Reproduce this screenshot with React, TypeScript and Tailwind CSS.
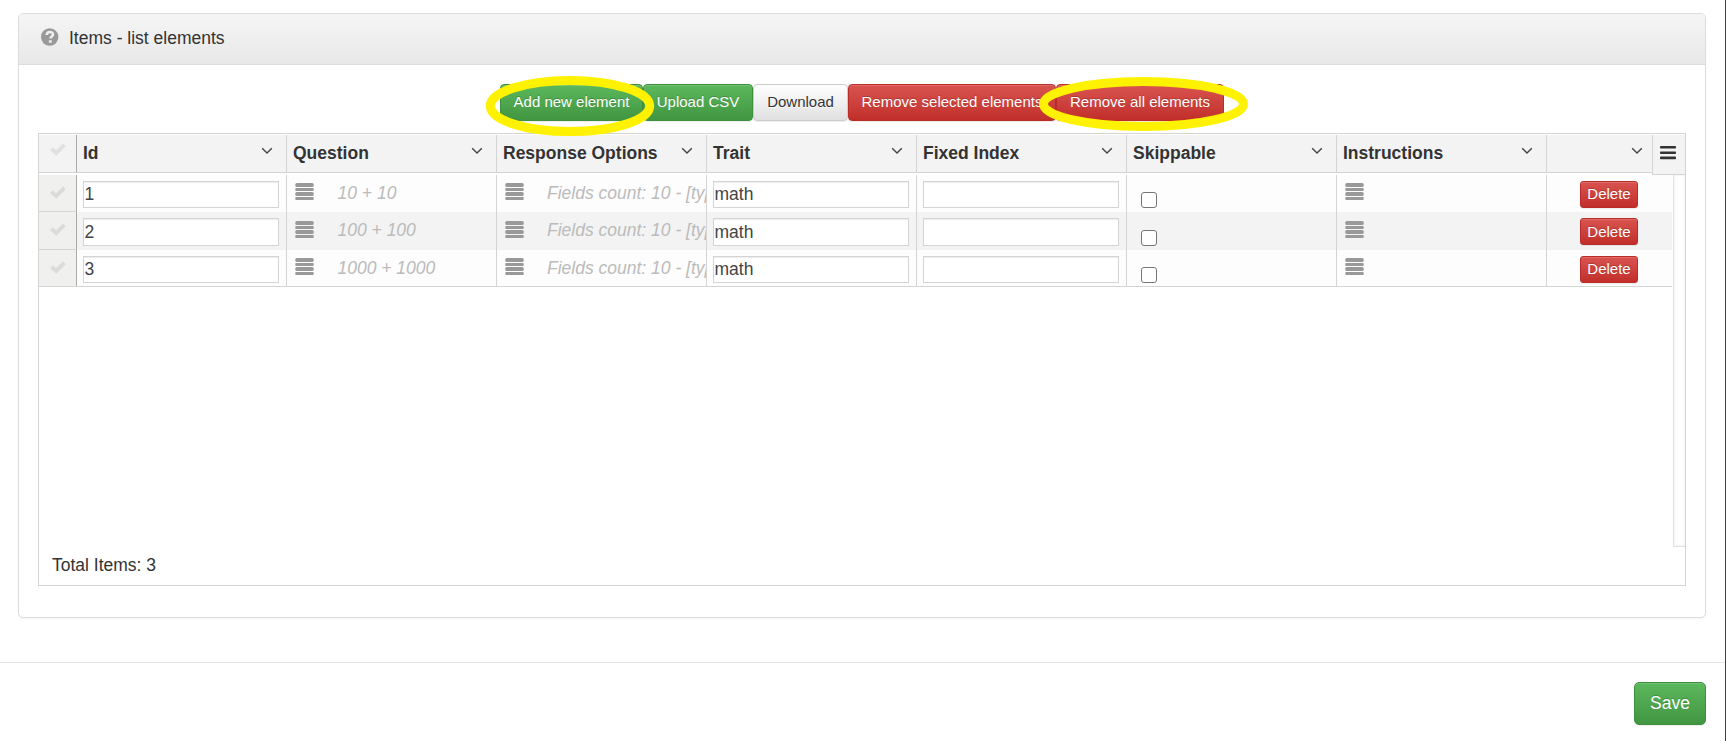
import React from "react";

const rows = [
  { id: "1", question: "10 + 10", trait: "math", shade: "bg-[#fdfdfd]" },
  { id: "2", question: "100 + 100", trait: "math", shade: "bg-[#f3f3f3]" },
  { id: "3", question: "1000 + 1000", trait: "math", shade: "bg-[#fdfdfd]" },
];

const columns = [
  "Id",
  "Question",
  "Response Options",
  "Trait",
  "Fixed Index",
  "Skippable",
  "Instructions",
];

const tones = {
  green:
    "border-[#3e8f3e] bg-linear-to-b from-[#5cb85c] to-[#419641] text-white [text-shadow:0_-1px_0_rgba(0,0,0,0.2)]",
  red: "border-[#b92c28] bg-linear-to-b from-[#d9534f] to-[#c12e2a] text-white [text-shadow:0_-1px_0_rgba(0,0,0,0.2)]",
  plain:
    "border-[#ccc] bg-linear-to-b from-white to-[#e0e0e0] text-[#333] [text-shadow:0_1px_0_#fff]",
};

function Button({
  tone,
  className,
  children,
}: {
  tone: keyof typeof tones;
  className: string;
  children: React.ReactNode;
}) {
  return (
    <button
      className={`flex shrink-0 items-center justify-center border whitespace-nowrap shadow-[inset_0_1px_0_rgba(255,255,255,0.15),0_1px_1px_rgba(0,0,0,0.075)] ${tones[tone]} ${className}`}
    >
      {children}
    </button>
  );
}

function HelpIcon() {
  return (
    <svg width="18" height="18" viewBox="0 0 18 18" className="-mt-[1px] shrink-0">
      <circle cx="8.7" cy="9" r="8.7" fill="#999" />
      <path
        d="M5.7 7C5.7 4.9 7 4 8.9 4c1.9 0 3.1 1 3.1 2.5 0 2-2.5 2.1-2.5 4"
        fill="none"
        stroke="#eee"
        strokeWidth="2.6"
      />
      <path d="M7.9 12.2h2.8v2.6H7.9z" fill="#eee" />
    </svg>
  );
}

function Check({ className }: { className: string }) {
  return (
    <svg width="16" height="13" viewBox="0 0 16 13" className={className}>
      <path d="M1.4 5.8 6.2 10 14.4 1.8" fill="none" stroke="currentColor" strokeWidth="3.9" />
    </svg>
  );
}

function Chevron() {
  return (
    <svg width="12" height="8" viewBox="0 0 12 8" className="mt-[12px] shrink-0">
      <path d="M1.2 1.2 6 6 10.8 1.2" fill="none" stroke="#444" strokeWidth="1.4" />
    </svg>
  );
}

function ListIcon() {
  return (
    <svg width="19" height="18" viewBox="0 0 19 18" className="mt-[8.75px] shrink-0" fill="#999">
      <rect x="0.3" y="0" width="18.4" height="4" rx="1.6" />
      <rect x="0.3" y="5" width="18.4" height="3" rx="0.8" />
      <rect x="0.3" y="9" width="18.4" height="4" rx="1.6" />
      <rect x="0.3" y="14" width="18.4" height="3" rx="0.8" />
    </svg>
  );
}

function Field({ value }: { value: string }) {
  return (
    <input
      readOnly
      value={value}
      className="mt-[6.25px] ml-[6px] h-[27.5px] w-[196px] border border-[#d4d4d4] bg-white pl-[0.5px] text-[17.5px] text-[#444] shadow-[inset_0_1px_1px_rgba(0,0,0,0.075)] outline-none"
    />
  );
}

const cell = "flex h-full w-[210px] shrink-0 items-start overflow-hidden border-r border-[#d4d4d4]";

export default function App() {
  return (
    <div className="relative flex h-[741px] w-[1726px] flex-col overflow-hidden bg-white pt-[13px] font-['Liberation_Sans',Arial,sans-serif] text-[17.5px] leading-[25px] text-[#333]">
      <section className="ml-[18px] flex h-[605px] w-[1688px] flex-col rounded-[5px] border border-[#ddd] bg-white shadow-[0_1px_2px_rgba(0,0,0,0.05)]">
        <header className="flex h-[51px] shrink-0 items-center rounded-t-[4px] border-b border-[#ddd] bg-linear-to-b from-[#f5f5f5] to-[#e8e8e8] pb-[3px] pl-[22px]">
          <HelpIcon />
          <h1 className="mt-[1px] ml-[10px]">Items - list elements</h1>
        </header>

        <div className="mt-[19px] ml-[481px] flex h-[37px] shrink-0 text-[15px]">
          <Button tone="green" className="w-[143px] rounded-[4px] pb-[3px]">Add new element</Button>
          <Button tone="green" className="w-[110px] rounded-[4px] pb-[3px]">Upload CSV</Button>
          <Button tone="plain" className="w-[95px] rounded-[4px] pb-[3px]">Download</Button>
          <Button tone="red" className="w-[208px] rounded-[4px] pb-[3px]">Remove selected elements</Button>
          <Button tone="red" className="w-[168px] rounded-[4px] pb-[3px]">Remove all elements</Button>
        </div>

        <div className="mt-[12px] ml-[19px] flex h-[453px] w-[1648px] shrink-0 flex-col border border-[#d4d4d4] pt-px">
          <div className="flex h-[39.5px] shrink-0 items-start">
            <div className="flex h-[38px] w-[38px] shrink-0 justify-center border-r border-b border-r-[#aaa] border-b-[#d4d4d4] bg-[#f3f3f3] pt-[8px]">
              <Check className="text-[#e0e0e0]" />
            </div>
            {columns.map((name) => (
              <div
                key={name}
                className="flex h-[38px] w-[210px] shrink-0 justify-between border-r border-b border-[#d4d4d4] bg-[#f3f3f3] pr-[13px] pl-[6px] font-bold"
              >
                <span className="mt-[6px]">{name}</span>
                <Chevron />
              </div>
            ))}
            <div className="flex h-[38px] w-[105px] shrink-0 justify-end border-b border-[#d4d4d4] bg-[#f3f3f3] pr-[9px]">
              <Chevron />
            </div>
            <div className="z-10 flex h-[40px] w-[33px] shrink-0 justify-start border-b border-l border-[#d4d4d4] bg-[#f3f3f3] pt-[11px] pl-[7px]">
              <svg width="16" height="14" viewBox="0 0 16 14" fill="#333">
                <rect y="0" width="16" height="2.6" rx="0.8" />
                <rect y="5.4" width="16" height="2.6" rx="0.8" />
                <rect y="10.6" width="16" height="2.6" rx="0.8" />
              </svg>
            </div>
          </div>

          <div className="flex h-[372.5px] shrink-0 justify-between">
            <div className="flex w-[1633px] flex-col">
              {rows.map((row, i) => (
                <div
                  key={row.id}
                  className={`flex h-[37.5px] shrink-0 ${row.shade} ${i === 2 ? "border-b border-[#d4d4d4]" : ""}`}
                >
                  <div
                    className={`flex w-[38px] shrink-0 justify-center border-r border-r-[#aaa] bg-[#f0f0ee] pt-[11px] ${i < 2 ? "border-b border-b-[#d4d4d4]" : ""}`}
                  >
                    <Check className="text-[#dbdbdb]" />
                  </div>
                  <div className={cell}>
                    <Field value={row.id} />
                  </div>
                  <div className={`${cell} pl-[8px]`}>
                    <ListIcon />
                    <span className="mt-[6px] ml-[23.5px] whitespace-nowrap text-[#bbb] italic">{row.question}</span>
                  </div>
                  <div className={`${cell} pl-[8px]`}>
                    <ListIcon />
                    <span className="mt-[6px] ml-[23px] whitespace-nowrap text-[#bbb] italic">
                      Fields count: 10 - [typ
                    </span>
                  </div>
                  <div className={cell}>
                    <Field value={row.trait} />
                  </div>
                  <div className={cell}>
                    <Field value="" />
                  </div>
                  <div className={cell}>
                    <input
                      type="checkbox"
                      className="mt-[17.5px] ml-[14px] size-[16px] appearance-none rounded-[3px] border border-[#767676] bg-white"
                    />
                  </div>
                  <div className={`${cell} pl-[8px]`}>
                    <ListIcon />
                  </div>
                  <div className="flex flex-1 items-start pl-[33px]">
                    <Button tone="red" className="mt-[6.25px] h-[27px] w-[58px] rounded-[3px] pb-[1px] text-[15px]">
                      Delete
                    </Button>
                  </div>
                </div>
              ))}
            </div>
            <div className="w-[12px] border-b border-l border-[#e2e2e2] bg-white shadow-[inset_0_0_2px_rgba(0,0,0,0.12)]" />
          </div>

          <p className="mt-[6px] ml-[13px]">Total Items: 3</p>
        </div>
      </section>

      <footer className="mt-[44px] flex justify-end border-t border-[#e5e5e5] pt-[19px] pr-[20px]">
        <Button tone="green" className="h-[43px] w-[72px] rounded-[5px] pb-[1px] text-[17.5px]">Save</Button>
      </footer>

      <svg
        width="770"
        height="70"
        viewBox="0 0 770 70"
        className="pointer-events-none absolute top-[70px] left-[482px] z-20"
        fill="none"
        stroke="#fff200"
        strokeWidth="9"
      >
        <ellipse cx="88" cy="36" rx="79.7" ry="25.6" />
        <ellipse cx="661.5" cy="34" rx="100" ry="22.6" />
      </svg>
      <div className="absolute inset-y-0 right-0 w-px bg-[#3c3f41]" />
    </div>
  );
}
